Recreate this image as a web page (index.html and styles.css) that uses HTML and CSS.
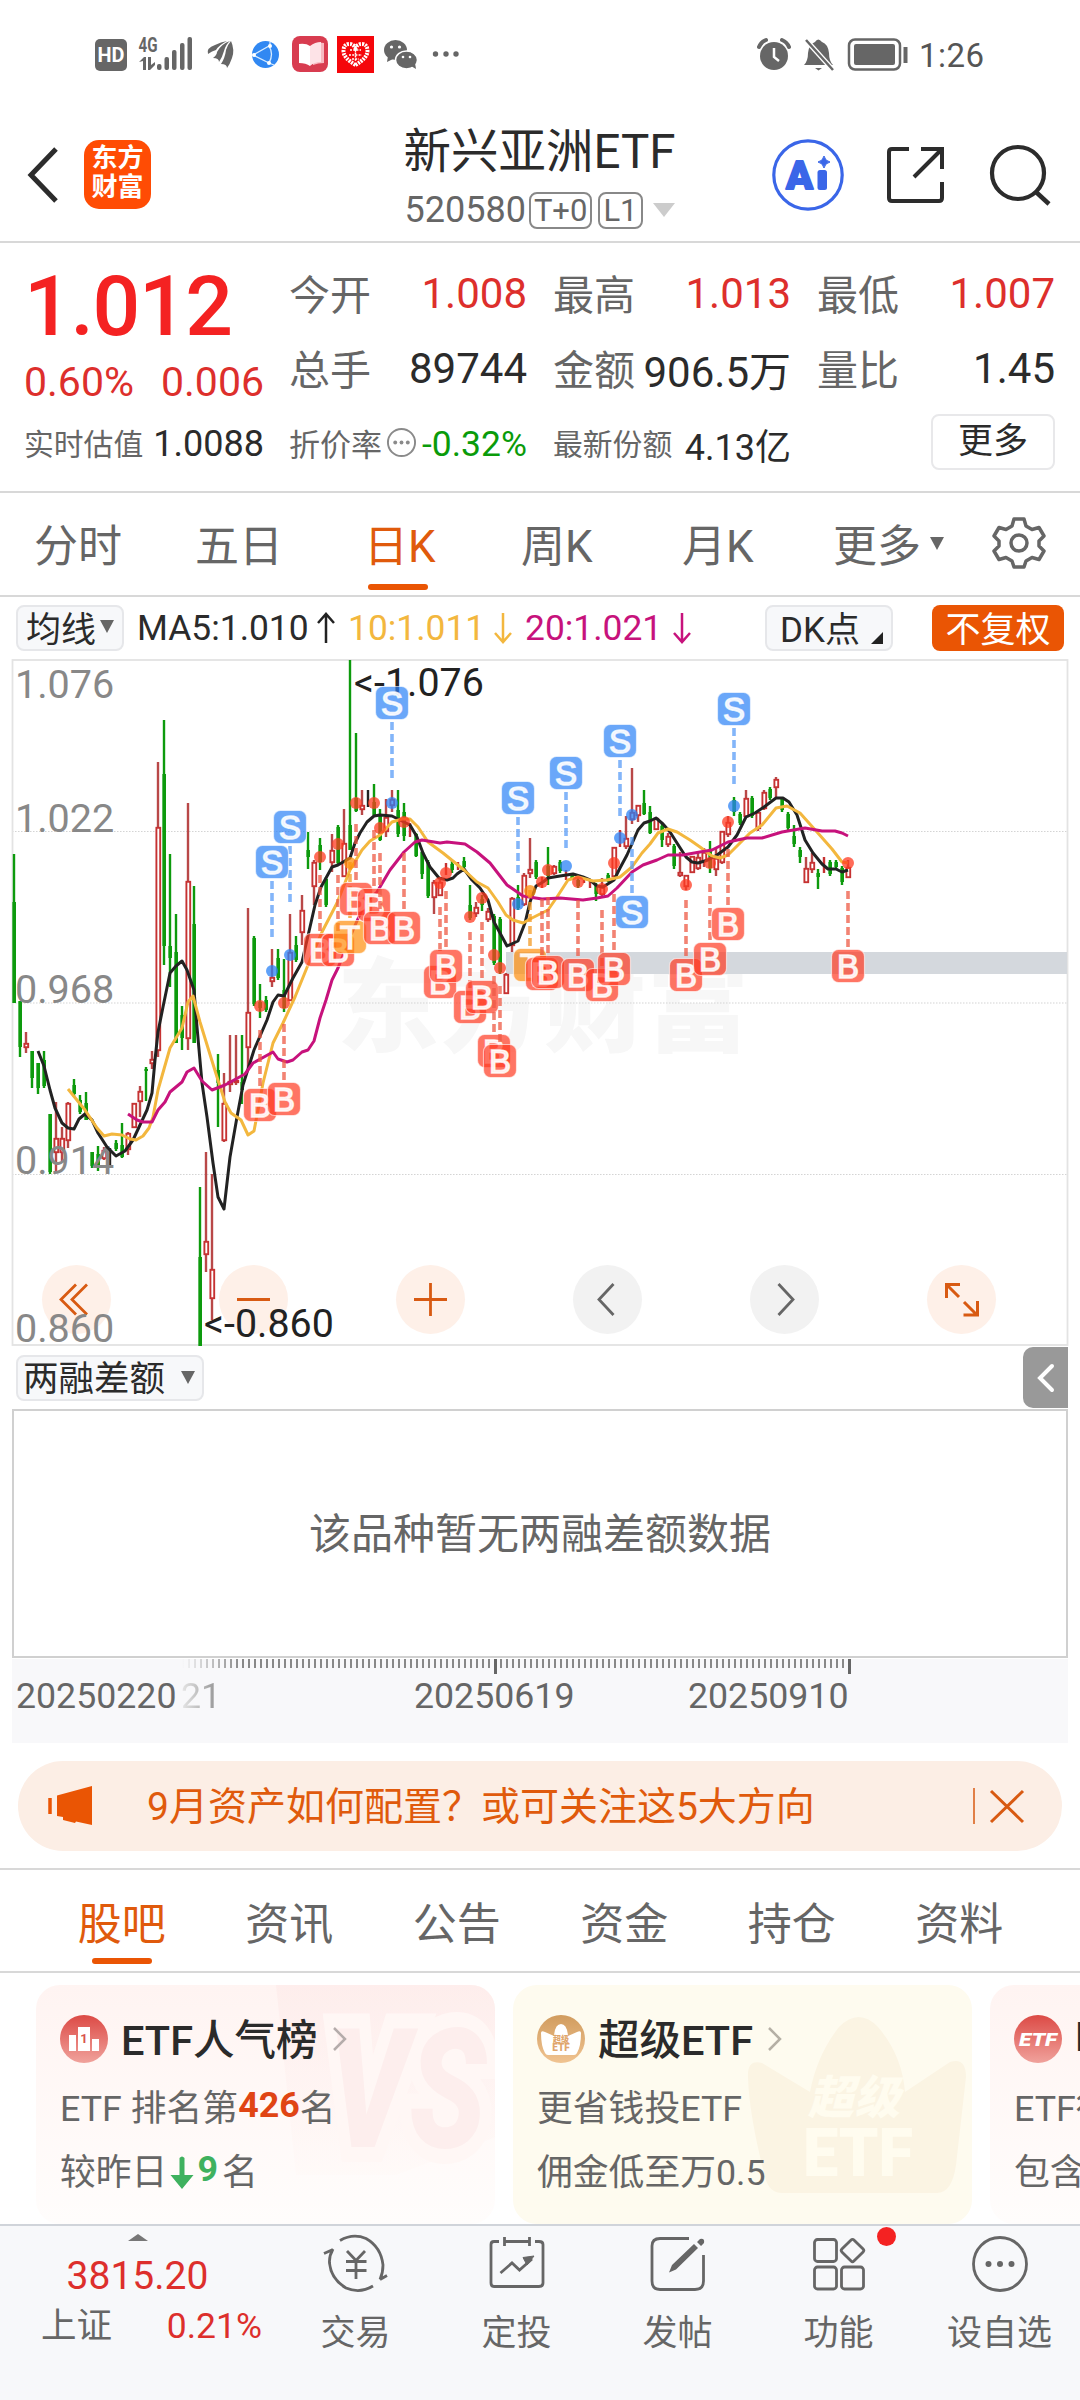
FILE: index.html
```html
<!DOCTYPE html>
<html lang="zh-CN">
<head>
<meta charset="utf-8">
<title>新兴亚洲ETF 520580</title>
<link rel="stylesheet" href="styles.css">
</head>
<body>
<div class="status">
  <svg class="status-left" viewBox="90 30 380 50" width="380" height="50">
    <g fill="#666">
      <rect x="95" y="39" width="32" height="32" rx="5"/>
      <text x="111" y="62" font-size="20" font-weight="700" fill="#fff" text-anchor="middle" textLength="27" lengthAdjust="spacingAndGlyphs">HD</text>
      <text x="138.500" y="51.500" font-size="20" font-weight="700" textLength="19" lengthAdjust="spacingAndGlyphs">4G</text>
      <path d="M139 62l5-5h2v13h-3v-9zM148 57h3v8l4-3v3l-5 5h-2z"/>
      <rect x="157" y="64" width="4.500" height="6" rx="2"/><rect x="164.500" y="57" width="4.500" height="13" rx="2"/><rect x="172" y="50" width="4.500" height="20" rx="2"/><rect x="180" y="43" width="4.500" height="27" rx="2"/><rect x="187.500" y="37" width="4.500" height="33" rx="2"/>
      <path d="M208 54Q206 48 215 45Q221 42 227 41Q219 45 216 50Q212 51 208 54zM213 58Q217 55 217 52Q221 44 230 41Q226 44 224 51Q222 58 219 62Q219 58 213 58zM221 64Q225 58 226 50Q228 44 231 41Q235 50 232 58Q230 64 227 68Q227 64 221 64z"/>
      <ellipse cx="395.500" cy="50" rx="11.500" ry="10"/><path d="M388 56l-1 6 6-3z"/>
      <ellipse cx="406.500" cy="60" rx="11" ry="9" stroke="#fff" stroke-width="1.500"/><path d="M411 66l5 3-1-6z"/>
      <circle cx="435.500" cy="54" r="2.700"/><circle cx="446" cy="54" r="2.700"/><circle cx="456" cy="54" r="2.700"/>
    </g>
    <g fill="#fff"><circle cx="391.500" cy="47" r="1.600"/><circle cx="399.500" cy="47" r="1.600"/><circle cx="403" cy="57" r="1.300"/><circle cx="410" cy="57" r="1.300"/></g>
    <circle cx="265.500" cy="54.500" r="13.500" fill="#3188f2"/>
    <path d="M253 55L269 46M253 55L269 63M269 46q5 8 0 17M270 42v4M269 63l5 2" fill="none" stroke="#d9ecff" stroke-width="1.300"/>
    <circle cx="254" cy="55" r="2" fill="#fff"/><circle cx="270" cy="46" r="2" fill="#fff"/><circle cx="269" cy="63" r="2" fill="#fff"/>
    <rect x="292" y="36" width="36" height="36" rx="8" fill="#d83c50"/>
    <path d="M313 45q6-3 11-2v20q-6 0-11 2z" fill="#f7b9c1"/><path d="M299 44q7-1 11 2v20q-4-3-11-3z" fill="#fff"/><path d="M310 46q5-4 11-4v20q-7 0-11 4z" fill="#fde3e7"/>
    <rect x="337" y="36" width="37" height="37" fill="#f5060b"/>
    <path d="M355.500 65q-12-7-12-14q0-7 6-7q4 0 6 4q2-4 6-4q6 0 6 7q0 7-12 14z" fill="none" stroke="#fff" stroke-width="4" stroke-dasharray="2 1"/>
    <path d="M350 50h11M349 55h13M352 59h7M355.500 46v16" stroke="#fff" stroke-width="1.500" stroke-dasharray="2 1.200"/>
  </svg>
  <svg class="status-right" viewBox="750 30 240 50" width="240" height="50">
    <g fill="none" stroke="#666">
      <circle cx="774" cy="56" r="14" fill="#666" stroke="none"/>
      <path d="M759 47q2-5 7-7M782 40q5 2 7 7" stroke-width="4" stroke-linecap="round"/>
      <path d="M774 48v9l5 4" stroke="#fff" stroke-width="2.500"/>
      <path d="M804 65q4-4 4-12q1-9 7-11q3-5 7 0q6 2 7 11q0 8 4 12z" fill="#666" stroke="none"/>
      <path d="M815 68h7l-3.500 2.500z" fill="#666" stroke="none"/>
      <path d="M806 40l27 30" stroke="#fff" stroke-width="5"/><path d="M806 40l27 30" stroke-width="2.500"/>
      <rect x="849" y="39.500" width="51" height="30" rx="6" stroke-width="2.500"/>
      <rect x="854" y="44" width="41" height="21" rx="2" fill="#666" stroke="none"/>
      <path d="M905.500 47v16" stroke-width="4"/>
    </g>
    <text x="919" y="67" font-size="33" fill="#555" textLength="65">1:26</text>
  </svg>
</div>

<header class="header">
  <svg class="back" viewBox="0 0 32 58" width="32" height="58"><path d="M29 3L4 29L29 55" fill="none" stroke="#2c2c2c" stroke-width="5"/></svg>
  <div class="logo"><span>东方</span><span>财富</span></div>
  <div class="name">
    <div class="title">新兴亚洲ETF</div>
    <div class="code">520580<span class="tag">T+0</span><span class="tag">L1</span><i class="tri-down"></i></div>
  </div>
  <svg class="ai" viewBox="0 0 72 72" width="72" height="72">
    <circle cx="36" cy="36" r="34.200" fill="none" stroke="#3a66e8" stroke-width="3.200"/>
    <text x="14" y="49.500" font-size="39" font-weight="900" fill="#3a66e8" stroke="#3a66e8" stroke-width="1.800" stroke-linejoin="round" textLength="27" lengthAdjust="spacingAndGlyphs">A</text>
    <rect x="45.500" y="31" width="9.500" height="20" rx="2.500" fill="#3a66e8"/>
    <path d="M52 17q1 5 6 6q-5 1-6 6q-1-5-6-6q5-1 6-6z" fill="#3a66e8" stroke="#3a66e8"/>
  </svg>
  <svg class="share" viewBox="0 0 60 60" width="60" height="60"><path d="M23 4H6Q3 4 3 7v46q0 3 3 3h47q3 0 3-3V37M35 4h21v20M56 4L28 32" fill="none" stroke="#2c2c2c" stroke-width="4"/></svg>
  <svg class="search" viewBox="0 0 62 62" width="62" height="62"><circle cx="29" cy="29" r="26" fill="none" stroke="#2c2c2c" stroke-width="4.200"/><path d="M47 48L60 60" stroke="#2c2c2c" stroke-width="4.500"/></svg>
</header>

<section class="quote">
  <div class="price">
    <div class="last">1.012</div>
    <div class="change"><span>0.60%</span><span>0.006</span></div>
    <div class="cell small"><label>实时估值</label><b>1.0088</b></div>
  </div>
  <div class="stats">
    <div class="cell"><label>今开</label><b class="up">1.008</b></div>
    <div class="cell"><label>最高</label><b class="up">1.013</b></div>
    <div class="cell"><label>最低</label><b class="up">1.007</b></div>
    <div class="cell"><label>总手</label><b>89744</b></div>
    <div class="cell"><label>金额</label><b>906.5万</b></div>
    <div class="cell"><label>量比</label><b>1.45</b></div>
    <div class="cell small"><label class="wide">折价率</label><svg viewBox="0 0 32 32" width="31" height="31"><circle cx="16" cy="16" r="14" fill="none" stroke="#8a8a8a" stroke-width="2"/><g fill="#8a8a8a"><circle cx="9.500" cy="16" r="2"/><circle cx="16" cy="16" r="2"/><circle cx="22.500" cy="16" r="2"/></g></svg><b class="down">-0.32%</b></div>
    <div class="cell small"><label>最新份额</label><b>4.13亿</b></div>
    <div class="cell right"><button class="more">更多</button></div>
  </div>
</section>

<nav class="periods">
  <span>分时</span><span>五日</span><span class="on">日K</span><span>周K</span><span class="month">月K</span><span class="p-more">更多<i></i></span>
  <svg viewBox="0 0 54 54" width="54" height="54"><path d="M22 3h10l2 7l6 3.500l7-2l5 8.500l-5 5v5l5 5l-5 8.500l-7-2l-6 3.500l-2 6h-10l-2-6l-6-3.500l-7 2l-5-8.500l5-5v-5l-5-5l5-8.500l7 2l6-3.500z" fill="none" stroke="#666" stroke-width="3.500" stroke-linejoin="round"/><circle cx="27" cy="27" r="8" fill="none" stroke="#666" stroke-width="3.500"/></svg>
</nav>

<div class="toolbar">
  <span class="pill ma">均线<i></i></span>
  <span class="ma5">MA5:1.010</span><svg class="arr" viewBox="0 0 20 32" width="20" height="32"><path d="M10 31V3M2 11l8-9 8 9" fill="none" stroke="#222" stroke-width="2.500"/></svg>
  <span class="ma10">10:1.011</span><svg class="arr" viewBox="0 0 20 32" width="20" height="32"><path d="M10 1v28M2 21l8 9 8-9" fill="none" stroke="#f3b73e" stroke-width="2.500"/></svg>
  <span class="ma20">20:1.021</span><svg class="arr" viewBox="0 0 20 32" width="20" height="32"><path d="M10 1v28M2 21l8 9 8-9" fill="none" stroke="#c7127c" stroke-width="2.500"/></svg>
  <span class="pill dk">DK点<i></i></span>
  <span class="pill fq">不复权</span>
</div>

<svg class="chart" viewBox="0 657 1080 692" width="1080" height="692">
  <text x="337" y="1044" class="watermark" textLength="412">东方财富</text>
  <path d="M12 831.500H1067M12 1003H1067M12 1174.500H1067" stroke="#d4d4d4" stroke-width="1.200" stroke-dasharray="1.500 1.500"/>
  <rect x="12.500" y="660" width="1055" height="685" fill="none" stroke="#e3e3e3" stroke-width="1.800"/>
  <rect x="506" y="952" width="561" height="22" fill="#d4d8dd"/>
  <g class="controls">
    <g fill="#fef0e8"><circle cx="76.500" cy="1299.500" r="34.500"/><circle cx="253.500" cy="1299.500" r="34.500"/><circle cx="430.500" cy="1299.500" r="34.500"/><circle cx="961.500" cy="1299.500" r="34.500"/></g>
    <g fill="#f2f2f2"><circle cx="607.500" cy="1299.500" r="34.500"/><circle cx="784.500" cy="1299.500" r="34.500"/></g>
    <g fill="none" stroke="#d85a12" stroke-width="2.800">
      <path d="M76 1284.500L61 1299.500L76 1314.500M87 1284.500L72 1299.500L87 1314.500M237 1299.500H270M414 1299.500H447M430.500 1283V1316"/>
      <path d="M946.500 1298V1284.500H960M947 1285L959 1297M964 1302L977 1315M977.500 1301V1315H963.500" stroke-width="3"/>
      <path d="M613.500 1284L599 1299.500L613.500 1315M778.500 1284L793 1299.500L778.500 1315" stroke="#666"/>
    </g>
  </g>
  <g id="candles"></g>
  <g class="scale"><text x="15" y="698">1.076</text><text x="15" y="832">1.022</text><text x="15" y="1003">0.968</text><text x="15" y="1174">0.914</text><text x="15" y="1342">0.860</text></g>
  <g class="peaks"><text x="354" y="696">&lt;-1.076</text><text x="204" y="1337">&lt;-0.860</text></g>
  <g class="lines"><polyline id="ma5" stroke="#222"/><polyline id="ma10" stroke="#f3b73e"/><polyline id="ma20" stroke="#c7127c"/></g>
  <g id="marks"></g>
</svg>

<div class="subbar">
  <span class="pill sel">两融差额<i></i></span>
  <span class="drawer"><svg viewBox="0 0 20 32" width="20" height="32"><path d="M16 4L4 16L16 28" fill="none" stroke="#fff" stroke-width="4" stroke-linecap="round"/></svg></span>
</div>
<div class="empty">该品种暂无两融差额数据</div>
<div class="timeline">
  <div class="ticks"></div>
  <div class="dates"><span>20250220</span><span class="ghost">21</span><span class="d2">20250619</span><span class="d3">20250910</span></div>
</div>

<div class="notice">
  <svg viewBox="0 0 46 40" width="46" height="40"><path d="M9 9.500L44 0V39L28 35.500L27 37L15 34V31L9 30z" fill="#ea5504"/><path d="M2 12v16" stroke="#ea5504" stroke-width="3.500"/></svg>
  <span class="notice-text">9月资产如何配置？或可关注这5大方向</span>
  <svg class="close" viewBox="0 0 54 40" width="54" height="40"><path d="M2 2v36" stroke="#d85a12" stroke-width="1.500"/><path d="M19 5L51 36M51 5L19 36" stroke="#d85a12" stroke-width="3"/></svg>
</div>

<nav class="tabs"><span class="on">股吧</span><span>资讯</span><span>公告</span><span>资金</span><span>持仓</span><span>资料</span></nav>

<section class="cards">
  <article class="card pink">
    <svg class="art" viewBox="0 0 225 239" width="225" height="239">
      <defs><linearGradient id="vs" x1="0" y1="0" x2="0" y2="1"><stop offset="0" stop-color="#fde9e8"/><stop offset="1" stop-color="#fff9f7"/></linearGradient></defs>
      <path d="M0 0H225V150L120 190H20z" fill="url(#vs)" opacity=".6"/>
      <text x="52" y="162" font-size="166" font-weight="900" font-style="italic" fill="#fff7f5" stroke="#fff7f5" stroke-width="30" textLength="158" lengthAdjust="spacingAndGlyphs">VS</text>
      <text x="52" y="162" font-size="166" font-weight="900" font-style="italic" fill="#fdeeed" textLength="158" lengthAdjust="spacingAndGlyphs">VS</text>
    </svg>
    <h3><svg viewBox="0 0 48 48" width="48" height="48"><defs><linearGradient id="rd" x1="0" y1="0" x2="0" y2="1"><stop offset="0" stop-color="#dc4a45"/><stop offset="1" stop-color="#f0a29c"/></linearGradient></defs><circle cx="24" cy="24" r="24" fill="url(#rd)"/><path d="M9 20h7v16H9zM18 12h12v24H18zM32 24h7v12h-7z" fill="#fff"/><text x="24" y="28" font-size="13" font-weight="700" fill="#d9534d" text-anchor="middle">1</text></svg><span>ETF人气榜</span><svg class="chev" viewBox="0 0 14 24" width="14" height="24"><path d="M1 1l11 11L1 23" fill="none" stroke="#b5acab" stroke-width="2.500"/></svg></h3>
    <p>ETF 排名第<b>426</b>名</p>
    <p>较昨日<svg viewBox="0 0 24 34" width="24" height="34"><path d="M9.500 2q2.500-3 5 0v17h9L12 33L.5 19h9z" fill="#3fb15f"/></svg><b class="gr">9</b><span class="rank">名</span></p>
  </article>
  <article class="card cream">
    <svg class="art" viewBox="0 0 225 239" width="225" height="239">
      <path d="M1 92Q0 74 15 78L63 107Q70 70 92 42Q112 22 131 42Q155 70 158 107L203 77Q219 72 219 92L209 180Q205 208 190 208H35Q22 208 18 192Q2 130 1 92z" fill="#fbf4e3"/>
      <g fill="#fffcef" font-weight="900"><text x="61" y="129" font-size="46" font-style="italic" textLength="92">超级</text><text x="56" y="191" font-size="66" textLength="110" lengthAdjust="spacingAndGlyphs">ETF</text></g>
    </svg>
    <h3><svg viewBox="0 0 48 48" width="48" height="48"><defs><linearGradient id="gd" x1="0" y1="0" x2="0" y2="1"><stop offset="0" stop-color="#d19c5e"/><stop offset="1" stop-color="#f0c391"/></linearGradient></defs><circle cx="24" cy="24" r="24" fill="url(#gd)"/><path d="M4 18q0-3 4-1l9 4q1-12 7-12t7 12l9-4q4-2 4 1q0 13-4 20q-1 2-3 2H11q-2 0-3-2q-4-7-4-20z" fill="#fff"/><g fill="#dfa66c" font-weight="900" text-anchor="middle"><text x="24" y="27" font-size="8">超级</text><text x="24" y="36" font-size="10">ETF</text></g></svg><span>超级ETF</span><svg class="chev" viewBox="0 0 14 24" width="14" height="24"><path d="M1 1l11 11L1 23" fill="none" stroke="#b5b0a5" stroke-width="2.500"/></svg></h3>
    <p>更省钱投ETF</p>
    <p>佣金低至万0.5</p>
  </article>
  <article class="card pink">
    <h3><svg viewBox="0 0 48 48" width="48" height="48"><circle cx="24" cy="24" r="24" fill="url(#rd)"/><text x="24" y="31" font-size="19" font-weight="900" font-style="italic" fill="#fff" text-anchor="middle" textLength="38" lengthAdjust="spacingAndGlyphs">ETF</text></svg><span>ETF</span></h3>
    <p>ETF行情</p>
    <p>包含</p>
  </article>
</section>

<footer class="bottom">
  <div class="index">
    <i></i>
    <div class="pts">3815.20</div>
    <div class="row"><span>上证</span><span class="up">0.21%</span></div>
  </div>
  <div class="item"><svg viewBox="0 0 66 60" width="66" height="60"><g fill="none" stroke="#666" stroke-width="2.800"><path d="M17 7.500Q30 0 43 5.500Q58 14 60 32Q60 40 57 46.500M50 53Q37 61 23 55Q8 46 6.500 30Q6 23 10 16M1 20.500L10 16.500M57 46.500L64 42.500M24 18l9 9.500L42 18M33 27.500V46M23 28.500H43.500M23 37.500H43.500"/></g></svg><span>交易</span></div>
  <div class="item"><svg viewBox="0 0 66 60" width="66" height="60"><g fill="none" stroke="#666" stroke-width="2.800"><path d="M15 8.500H10Q7 8.500 7 11.500V50Q7 53.500 10 53.500H55Q59 53.500 59 50V11.500Q59 8.500 55 8.500H51M20.500 4v9M45.500 4v9M20.500 8.500H45.500M16.500 40L28 30L35.500 37L48 26"/><path d="M39 24.500L50 23L43 32z" fill="#666" stroke-width="1"/></g></svg><span>定投</span></div>
  <div class="item"><svg viewBox="0 0 66 60" width="66" height="60"><path d="M44 5.500H15Q7 5.500 7 13V48Q7 56.500 15 56.500H50Q58.500 56.500 58.500 48V22" fill="none" stroke="#666" stroke-width="2.800"/><path d="M24 39.500L27 32L49 11L53 15L31 36.500zM52 9l3-3q5-1 4 4l-3 3z" fill="#666"/></svg><span>发帖</span></div>
  <div class="item"><svg viewBox="0 0 66 60" width="66" height="60"><g fill="none" stroke="#666" stroke-width="2.800"><rect x="8.500" y="6.500" width="22" height="22" rx="3"/><rect x="8.500" y="34" width="22" height="22" rx="3"/><rect x="35.500" y="34" width="22" height="22" rx="3"/><rect x="38" y="9" width="17" height="17" rx="2" transform="rotate(45 46.500 17.500)"/></g></svg><em></em><span>功能</span></div>
  <div class="item"><svg viewBox="0 0 66 60" width="66" height="60"><circle cx="33" cy="31" r="26.500" fill="none" stroke="#666" stroke-width="2.800"/><g fill="#666"><circle cx="21.500" cy="31" r="3"/><circle cx="33" cy="31" r="3"/><circle cx="44.500" cy="31" r="3"/></g></svg><span>设自选</span></div>
</footer>
<script src="chart.js"></script>
</body>
</html>
```
FILE: chart.js
```js
// One entry per trading day, 6px apart: [colour, wickTop, wickBottom, bodyTop, bodyBottom]
const days = [
['g',854,1003,902,1003],['g',1001,1057,1001,1047],['r',1032,1053,1043,1048],['g',1051,1088,1051,1078],['g',1063,1094,1063,1088],
['g',1051,1088,1060,1086],['g',1114,1174,1114,1172],['r',1102,1171,1138,1153],['r',1127,1162,1138,1153],['r',1102,1148,1103,1141],
['g',1079,1097,1085,1094],['g',1095,1114,1100,1112],['g',1092,1120,1103,1120],['g',1152,1168,1152,1166],['g',1146,1171,1154,1165],
['r',1147,1160,1150,1159],['k',1148,1165],['g',1140,1151,1143,1149],['g',1123,1158,1145,1157],['r',1132,1155,1133,1150],
['r',1103,1128,1103,1128],['r',1086,1117,1091,1102],['g',1067,1101,1069,1071],['r',1051,1069,1059,1064],['r',762,1057,827,1051],
['g',720,965,774,946],['g',854,987,946,958],['g',914,1043,952,1043],['g',1006,1050,1015,1038],['r',803,1050,881,1039],
['g',886,1043,924,1043],['g',1187,1346,1257,1346],['r',1152,1272,1241,1255],['r',1174,1320,1269,1299],['g',1054,1127,1070,1083],
['r',1073,1142,1103,1141],['r',1035,1092,1081,1085],['r',1035,1085,1080,1083],['g',1035,1104,1082,1090],['r',908,1068,1012,1048],
['g',936,1006],['g',984,1018,1002,1008],['g',996,1012,1000,1010],['r',949,987,977,982],['g',949,980,958,978],
['g',959,1012,990,1008],['r',914,1001,952,1001],['g',936,962,945,960],['r',895,945,910,933],['g',832,869,850,857],
['r',860,905,862,887],['g',838,870,845,862],['g',877,907],['r',834,872,850,863],['g',825,865],
['r',809,877,843,877],['g',660,850,825,850],['g',733,812,798,811],['r',790,815,805,810],['k',790,807],
['g',784,817,802,815],['g',809,841,816,840],['r',799,837,817,832],['r',790,812,799,806],['g',790,837,810,834],
['g',803,841,812,836],['r',823,837],['g',833,857,834,856],['g',851,879,852,874],['g',860,898],
['r',880,914,882,898],['r',880,896,882,896],['r',863,875],['g',861,873,864,870],['r',862,870],
['g',857,868,861,867],['g',885,920,905,918],['r',902,917,907,914],['g',895,911,899,905],['r',908,922,911,920],
['g',914,965,916,963],['g',917,974,919,972],['r',973,994,974,994],['r',897,952,898,946],['g',885,910,897,908],
['r',873,906,875,905],['r',838,878,869,874],['g',860,879],['r',877,888],['g',847,885,866,876],
['r',865,875,866,874],['g',860,873],['r',870,880],['g',873,880],['g',877,888,880,886],['r',877,883],
['r',880,888],['g',883,901,885,894],['r',878,897,887,895],['g',873,882],['r',847,877,847,877],
['r',830,847],['r',816,849,838,847],['r',768,824,812,820],['r',805,822,805,816],['g',790,815,803,814],
['g',806,834,812,833],['r',818,830,818,830],['g',824,847,826,840],['r',833,847,836,845],['g',844,869,846,866],
['r',852,877,872,876],['r',875,890,875,887],['r',856,873,856,873],['r',852,870,857,869],['r',848,867,852,862],
['g',841,873,851,868],['r',848,876,858,870],['r',831,864,831,863],['r',816,837,822,835],['g',797,816,800,812],
['g',812,825,814,823],['r',790,817,798,817],['g',796,818],['r',812,831,812,829],['r',790,810,792,809],
['g',787,800],['r',777,797,779,788],['g',797,812],['g',812,830],['g',825,847,836,844],
['g',847,863,850,857],['r',857,883,868,883],['r',853,873,862,870],['g',869,889,873,877],['r',857,873],
['g',860,876],['g',860,869],['g',866,885,868,882],['r',860,878,867,878]
];
const ink = { g: '#0d9a0d', r: '#c63232', k: '#222' };
let out = '';
days.forEach(([c, t, b, bt, bb], i) => {
  const x = 14 + 6 * i;
  if (c === 'r' && bt !== undefined) {
    if (bt > t) out += `<path d="M${x} ${t}V${bt}" stroke="#b94848" stroke-width="2.400"/>`;
    if (b > bb) out += `<path d="M${x} ${bb}V${b}" stroke="#b94848" stroke-width="2.400"/>`;
    out += `<rect x="${x - 1.6}" y="${bt + .8}" width="3.8" height="${Math.max(bb - bt - 1.6, 1)}" fill="#fff" stroke="${ink.r}" stroke-width="1.900"/>`;
  } else {
    out += `<path d="M${x} ${t}V${b}" stroke="${ink[c]}" stroke-width="2.400"/>`;
    if (c === 'g') out += `<path d="M${x + .2} ${bt ?? t + 2}V${bb ?? b - 2}" stroke="${ink.g}" stroke-width="3.600"/>`;
  }
});
document.getElementById('candles').innerHTML = out;

const series = {
  ma5: '38,1051 44,1066 50,1090 55,1108 62,1123 68,1128 74,1129 79,1119 85,1114 92,1120 98,1133 107,1147 116,1156 125,1151 133,1140 140,1125 147,1110 152,1093 155,1060 158,1032 163,1007 170,973 176,966 182,961 187,970 194,990 197,1027 202,1083 207,1117 213,1163 218,1197 224,1209 230,1157 237,1117 243,1085 254,1050 267,1020 273,1002 278,995 284,996 293,978 302,962 310,927 315,905 321,887 326,878 332,867 338,865 350,858 355,843 360,833 367,822 374,816 380,815 392,816 402,821 410,825 417,837 423,853 430,867 439,878 447,880 453,878 457,874 464,869 472,880 480,888 488,900 494,922 500,933 507,946 518,941 525,923 530,902 536,886 543,882 548,878 560,876 573,874 583,877 590,880 597,886 603,887 614,880 620,868 627,855 638,830 644,823 650,821 656,818 663,824 670,832 677,843 686,857 692,862 698,863 708,860 717,855 728,847 737,835 746,817 755,813 764,807 776,798 783,798 789,802 797,815 805,840 813,853 822,864 828,869 836,869 842,872 848,870',
  ma10: '68,1089 85,1110 97,1128 104,1136 112,1134 122,1135 130,1139 136,1140 143,1136 149,1128 153,1117 158,1090 170,1048 182,1028 188,1002 193,996 200,1022 208,1048 217,1077 225,1102 231,1113 241,1120 248,1135 254,1131 258,1110 263,1083 273,1043 283,1023 295,997 308,965 322,932 337,903 350,870 362,850 370,841 380,835 392,822 402,819 410,819 418,827 428,842 443,853 464,870 477,882 488,888 498,902 506,915 513,920 523,923 532,918 548,910 557,897 568,880 578,877 593,881 607,880 620,877 632,867 642,853 650,844 658,833 668,829 677,832 690,840 700,847 712,856 720,858 728,855 740,843 750,833 762,825 776,808 787,806 800,813 817,832 832,849 842,862 848,863',
  ma20: '128,1114 137,1120 143,1122 152,1122 158,1110 165,1102 170,1092 182,1082 187,1072 194,1068 202,1081 212,1090 225,1085 245,1074 253,1063 273,1052 278,1059 287,1062 293,1060 302,1052 308,1050 314,1041 320,1018 326,1000 332,980 338,968 353,930 365,903 377,892 390,870 404,852 415,842 422,840 440,843 447,842 465,844 477,852 490,863 507,885 523,896 542,899 560,898 583,900 597,898 608,896 617,888 632,872 643,865 657,860 668,855 683,855 700,852 712,850 728,842 747,838 762,838 782,832 805,828 822,831 835,831 842,833 848,836'
};
for (const id in series) document.getElementById(id).setAttribute('points', series[id]);

// Trade marks: [letter, x, badge centre y, dot centre y]
const marks = [
['S',290,827,955],['S',272,862,971],['S',392,703,803],['S',518,798,904],['S',566,773,866],['S',620,741,838],['S',632,912,815],['S',734,709,806],
['B',260,1105,1006],['B',284,1099,1003],['B',320,950,857],['B',338,950,844],['T',350,937,863],['B',356,899,803],['B',374,905,803],
['B',380,928,828],['B',404,928,822],['B',440,982,883],['B',446,966,873],['B',470,1007,917],['B',482,997,898],['B',494,1051,955],['B',500,1061,968],
['T',530,965,891],['B',542,974,882],['B',548,972,870],['B',578,975,882],['B',602,985,889],['B',614,969,863],['B',686,975,885],['B',710,959,863],['B',728,924,822],['B',848,966,863]
];
const paint = { S: ['#2b82f6', '#5a9df8'], B: ['#ff3b22', '#ee5a45'], T: ['#ff8f0c', '#f39a24'] };
document.getElementById('marks').innerHTML = marks.map(([k, x, y, dot]) => {
  const [fill, line] = paint[k];
  const start = y < dot ? y + 19 : y - 75;
  return `<path d="M${x} ${start}v56" stroke="${line}" stroke-width="3.600" stroke-dasharray="8 4" opacity=".75"/>` +
    `<circle cx="${x}" cy="${dot}" r="6" fill="${fill}" opacity=".75"/>` +
    `<rect x="${x - 16.5}" y="${y - 16.5}" width="33" height="33" rx="7" fill="${fill}" fill-opacity=".7" stroke="#fff" stroke-opacity=".6" stroke-width="1.200"/>` +
    `<text class="mark" x="${x}" y="${y + 11.500}">${k}</text>`;
}).join('');
```
FILE: styles.css
```css
* { box-sizing: border-box; }
body { margin: 0; width: 1080px; height: 2400px; overflow: hidden; background: #fff; color: #2b2b2b; font-family: Roboto, "Noto Sans CJK SC", sans-serif; }
svg { display: block; flex: none; }
span, b, label, i { white-space: nowrap; flex: none; }
.up { color: #dd2f2c; }

.status { height: 108px; padding: 30px 90px 0; display: flex; justify-content: space-between; }

.header { height: 135px; display: flex; align-items: center; border-bottom: 2px solid #d8d8d8; padding-left: 27px; }
.logo { margin-left: 25px; width: 67px; height: 69px; border-radius: 15px; background: #ff4c04; color: #fff; display: flex; flex-direction: column; align-items: center; justify-content: center; font-size: 26px; line-height: 29px; font-weight: 700; padding-bottom: 3px; }
.name { width: 621px; display: flex; flex-direction: column; align-items: center; height: 133px; padding: 17px 0 0 156px; }
.title { font-size: 47.500px; line-height: 54px; }
.code { display: flex; align-items: center; font-size: 36px; line-height: 48px; color: #666; margin-top: 7px; }
.tag { border: 2px solid #888; border-radius: 8px; height: 37px; padding: 0 3px; font-size: 31px; line-height: 33px; margin-left: 3px; }
.tag + .tag { margin-left: 6px; }
.tri-down { border: 11px solid transparent; border-top: 14px solid #ccc; border-bottom: 0; margin-left: 10px; }
.ai { margin-right: 42px; }
.share { margin-right: 43px; }

.quote { height: 250px; border-bottom: 2px solid #d8d8d8; padding: 14px 0 0 24px; display: flex; gap: 25px; }
.price { width: 240px; }
.last { height: 100px; line-height: 99px; font-size: 84px; font-weight: 500; letter-spacing: -1.300px; color: #f42222; margin-left: 0; }
.change { height: 50px; line-height: 51px; font-size: 41px; color: #dd2f2c; display: flex; justify-content: space-between; }
.stats { display: grid; grid-template-columns: repeat(3, 238px); column-gap: 26px; grid-auto-rows: 75px; }
.cell { height: 75px; display: flex; align-items: center; justify-content: space-between; font-size: 42px; }
.cell label { color: #666; font-size: 41px; padding-bottom: 5px; }
.cell b { font-weight: 400; padding-bottom: 2px; }
.cell.small { font-size: 36px; }
.cell.small label { font-size: 29.800px; }
.cell.small label.wide { font-size: 31px; }
.cell.small svg { margin-bottom: 5px; }
.cell .down { color: #0a9b0a; font-size: 35.500px; }
.cell.right { justify-content: flex-end; }
.more { width: 124px; height: 56px; border: 2px solid #e8e8ea; border-radius: 8px; background: #fff; font: 35px/52px Roboto, "Noto Sans CJK SC", sans-serif; color: #2b2b2b; padding: 0; margin-bottom: 6px; }

.periods { height: 104px; border-bottom: 2px solid #d8d8d8; display: flex; align-items: center; font-size: 44px; color: #666; padding-left: 34px; padding-bottom: 2px; }
.periods > span { width: 161px; }
.periods .on, .tabs .on { color: #e05a0c; height: 100%; display: flex; flex-direction: column; justify-content: center; position: relative; }
.periods .on::after, .tabs .on::after { content: ""; position: absolute; width: 60px; height: 6px; border-radius: 3px; background: #ea5504; }
.periods .on { width: 165px; padding-left: 8px; }
.periods .on::after { left: 12px; bottom: 3px; }
.periods .month { width: 151px; }
.periods .p-more { width: 159px; display: flex; align-items: center; }
.p-more i { border: 7px solid transparent; border-top: 13px solid #666; border-bottom: 0; margin-left: 9px; }

.toolbar { height: 60px; display: flex; align-items: center; padding: 1px 16px 0; font-size: 35.400px; }
.pill { height: 46px; display: flex; align-items: center; background: #f7f8fa; border: 2px solid #e6e7ea; border-radius: 8px; font-size: 35px; padding: 0 0 3px 8px; }
.ma { width: 108px; margin-right: 13px; }
.pill i { border: 7.500px solid transparent; border-top: 13px solid #666; border-bottom: 0; margin-left: 4px; }
.ma5 { width: 179px; }
.ma10 { color: #f3b73e; width: 145px; margin-left: 12px; }
.ma20 { color: #c7127c; width: 147px; margin-left: 12px; }
.dk { width: 128px; margin-left: auto; padding-left: 13px; }
.pill.dk i { border: 0; border-left: 12px solid transparent; border-bottom: 12px solid #222; align-self: flex-end; margin: 0 0 2px 11px; }
.pill.fq { width: 132px; background: #ea5504; border: 0; color: #fff; padding: 0 0 3px; justify-content: center; margin-left: 39px; }

.watermark { font-size: 102px; font-weight: 900; fill: #f7f7f7; }
.scale { font-size: 39.500px; fill: #888; }
.peaks { font-size: 39.400px; fill: #222; }
.lines { fill: none; stroke-width: 3; stroke-linejoin: round; }
.mark { font: 33px "Liberation Sans", sans-serif; fill: #fff; fill-opacity: .9; stroke: #fff; stroke-opacity: .8; stroke-width: 1.600; text-anchor: middle; }

.subbar { height: 60px; padding: 0 12px 3px 16px; display: flex; justify-content: space-between; align-items: center; }
.sel { width: 188px; padding-left: 5px; font-size: 35.500px; padding-bottom: 4px; }
.sel i { margin: 3px 0 0 16px; }
.drawer { width: 45px; height: 61px; background: #999; border-radius: 10px 0 0 10px; display: flex; align-items: center; justify-content: center; }
.empty { height: 249px; margin: 0 12px; border: 2px solid #d0d0d0; display: flex; align-items: center; justify-content: center; font-size: 42px; color: #666; padding-bottom: 6px; }
.timeline { margin: 1px 12px 0; height: 84px; background: #f8f8fa; }
.ticks { height: 15px; margin-left: 170px; width: 669px; background: linear-gradient(#666, #666) 312px 0 / 3px 15px no-repeat, linear-gradient(#666, #666) 666px 0 / 3px 15px no-repeat, linear-gradient(90deg, #f8f8fa, #f8f8fa00 60px) 0 0 / 60px 9px no-repeat, repeating-linear-gradient(90deg, #888 0 2px, transparent 2px 6px) 0 0 / 669px 9px no-repeat; }
.dates { display: flex; font-size: 35.700px; line-height: 42px; color: #666; padding-left: 4px; margin-top: 1px; }
.dates span { width: 162px; }
.dates .ghost { width: 236px; padding-left: 3px; background: linear-gradient(90deg, #eee, #888 45px); background-clip: text; color: transparent; }
.dates .d2 { width: 274px; }

.notice { margin: 18px 18px 17px; height: 90px; border-radius: 45px; background: #fceee5; display: flex; align-items: center; padding: 0 36px 0 30px; color: #e05a0c; font-size: 39px; }
.notice-text { margin-left: 53px; padding-bottom: 6px; }
.close { margin-left: auto; }

.tabs { height: 105px; border-top: 2px solid #d8d8d8; border-bottom: 2px solid #d8d8d8; display: flex; padding: 0 37px 0 38px; font-size: 44px; color: #666; }
.tabs span { flex: 1; display: flex; flex-direction: column; align-items: center; justify-content: center; }
.tabs .on::after { bottom: 7px; }

.cards { height: 251px; padding: 12px 0 0 36px; display: flex; gap: 18px; overflow: hidden; }
.card { position: relative; flex: none; width: 459px; height: 239px; border-radius: 24px; overflow: hidden; padding: 30px 24px; color: #666; }
.pink { background: linear-gradient(#fff4f2, #fffdfc); }
.cream { background: #fefbef; }
.art { position: absolute; right: 0; top: 0; }
.pink .art { right: -6px; }
.card h3 { position: relative; margin: 0 0 10px; display: flex; align-items: center; height: 48px; font-size: 41.500px; font-weight: 500; color: #2b2b2b; gap: 13px; }
.card h3 span { padding-bottom: 5px; }
.chev { margin-left: 2px; }
.card p { position: relative; margin: 0; height: 64px; display: flex; align-items: center; font-size: 35.800px; white-space: pre; }
.card p b { color: #e04514; font-weight: 700; }
.card p svg { margin: 8px 3px 0; }
.card p b.gr { color: #3fb15f; }
.rank { margin-left: 4px; }

.bottom { height: 176px; border-top: 2px solid #d0d4da; background: #f7f8fa; display: flex; color: #666; }
.index { width: 275px; display: flex; flex-direction: column; align-items: center; }
.index > i { border: 10px solid transparent; border-top: 0; border-bottom: 7px solid #777; margin-top: 8px; }
.pts { color: #dd2f2c; font-size: 39px; line-height: 48px; margin-top: 11px; }
.row { align-self: stretch; display: flex; justify-content: space-between; padding: 0 13px 0 41px; font-size: 35.500px; line-height: 50px; margin-top: 1px; }
.item { width: 161px; display: flex; flex-direction: column; align-items: center; position: relative; padding-top: 7px; font-size: 35px; line-height: 48px; }
.item span { margin-top: 17px; }
.item em { position: absolute; left: 119px; top: 1px; width: 19px; height: 19px; border-radius: 50%; background: #f42222; }
```
